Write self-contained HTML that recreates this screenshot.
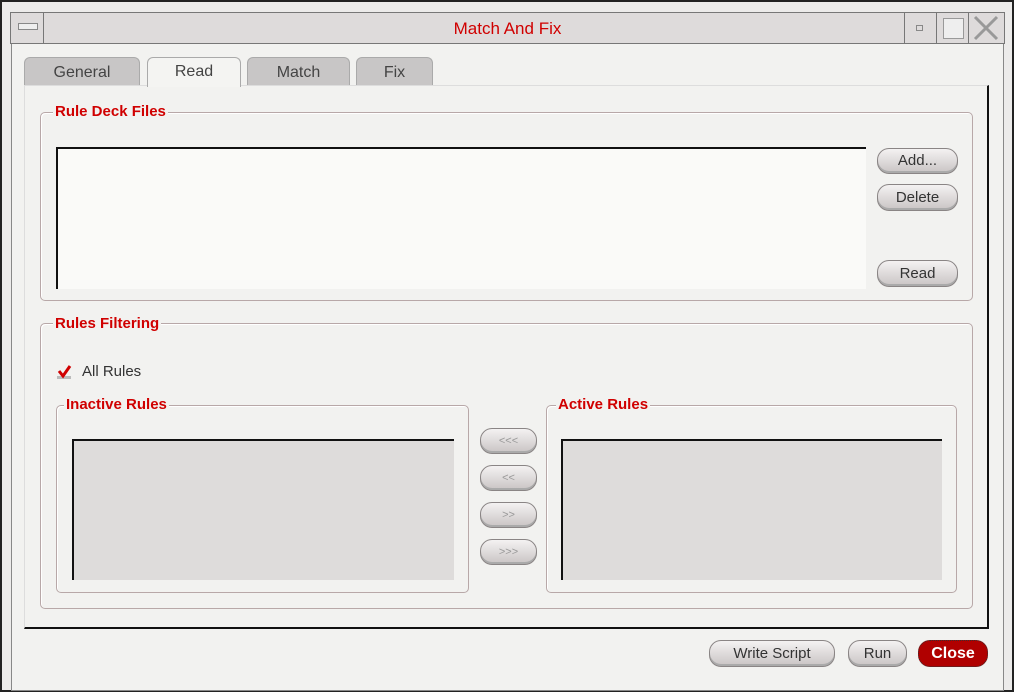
<!DOCTYPE html><html><head><style>
body{margin:0;width:1015px;height:694px;background:#fff;position:relative;overflow:hidden;font-family:"Liberation Sans",sans-serif}
.a{position:absolute;box-sizing:border-box}
.btn{position:absolute;box-sizing:border-box;border:1px solid #8a8585;border-radius:12px;background:linear-gradient(#f4f2f2,#dad6d6 60%,#c9c4c4);color:#333;font-size:15px;text-align:center;box-shadow:inset 0 -2px 0 #aaa}
.grp{position:absolute;box-sizing:border-box;border:1px solid #b8a8a8;border-radius:5px;box-shadow:1px 1px 0 #fff inset}
.lbl{position:absolute;color:#d00000;font-weight:bold;font-size:15px;background:#f2f2f0;padding:0 2px;line-height:16px}
.tab{position:absolute;box-sizing:border-box;border:1px solid #aaa;border-bottom:none;border-radius:6px 6px 0 0;background:#c8c6c6;color:#444;font-size:16px;text-align:center;line-height:30px}
</style></head><body>
<div class="a" style="left:0;top:0;width:1014px;height:692px;border:2px solid #222;background:#ecebea"></div>
<div class="a" style="left:10px;top:12px;width:995px;height:32px;border:1px solid #777;background:#dedbdb"></div>
<div class="a" style="left:43px;top:12px;width:1px;height:32px;background:#777"></div>
<div class="a" style="left:18px;top:23px;width:20px;height:7px;border:1px solid #888;background:#eee"></div>
<div class="a" style="left:0;top:19px;width:1015px;text-align:center;color:#d00000;font-size:17px">Match And Fix</div>
<div class="a" style="left:904px;top:12px;width:1px;height:32px;background:#777"></div>
<div class="a" style="left:936px;top:12px;width:1px;height:32px;background:#777"></div>
<div class="a" style="left:968px;top:12px;width:1px;height:32px;background:#777"></div>
<div class="a" style="left:916px;top:25px;width:7px;height:6px;border:1px solid #888"></div>
<div class="a" style="left:943px;top:18px;width:21px;height:21px;border:1px solid #999;background:#eee"></div>
<svg class="a" style="left:972px;top:15px" width="28" height="26"><path d="M3 2L25 24M25 2L3 24" stroke="#999" stroke-width="3"/></svg>
<div class="a" style="left:11px;top:44px;width:993px;height:647px;border:1px solid #888;border-top:none;background:#f2f2f0"></div>
<div class="tab" style="left:24px;top:57px;width:116px">General</div>
<div class="tab" style="left:147px;top:57px;width:94px;background:#f4f4f2;height:30px;line-height:28px;z-index:2">Read</div>
<div class="tab" style="left:247px;top:57px;width:103px">Match</div>
<div class="tab" style="left:356px;top:57px;width:77px">Fix</div>
<div class="a" style="left:24px;top:85px;width:965px;height:544px;border:1px solid #ddd;border-right:2px solid #111;border-bottom:2px solid #111;background:#f2f2f0"></div>
<div class="grp" style="left:40px;top:112px;width:933px;height:189px"></div>
<div class="lbl" style="left:53px;top:104px">Rule Deck Files</div>
<div class="a" style="left:56px;top:147px;width:810px;height:142px;background:#fafaf8;border-top:2px solid #111;border-left:2px solid #111"></div>
<div class="btn" style="left:877px;top:148px;width:81px;height:26px;line-height:24px">Add...</div>
<div class="btn" style="left:877px;top:184px;width:81px;height:27px;line-height:25px">Delete</div>
<div class="btn" style="left:877px;top:260px;width:81px;height:27px;line-height:25px">Read</div>
<div class="grp" style="left:40px;top:323px;width:933px;height:286px"></div>
<div class="lbl" style="left:53px;top:316px">Rules Filtering</div>
<svg class="a" style="left:56px;top:364px" width="18" height="16"><rect x="1" y="12" width="14" height="3" fill="#bbb"/><path d="M3 7L7 12L14 2" stroke="#d00000" stroke-width="3" fill="none"/></svg>
<div class="a" style="left:82px;top:363px;font-size:15px;color:#333">All Rules</div>
<div class="grp" style="left:56px;top:405px;width:413px;height:188px"></div>
<div class="lbl" style="left:64px;top:397px">Inactive Rules</div>
<div class="a" style="left:72px;top:439px;width:382px;height:141px;background:#dedcdb;border-top:2px solid #111;border-left:2px solid #111"></div>
<div class="grp" style="left:546px;top:405px;width:411px;height:188px"></div>
<div class="lbl" style="left:556px;top:397px">Active Rules</div>
<div class="a" style="left:561px;top:439px;width:381px;height:141px;background:#dedcdb;border-top:2px solid #111;border-left:2px solid #111"></div>
<div class="btn" style="left:480px;top:428px;width:57px;height:26px;line-height:24px;font-size:11px;color:#999">&lt;&lt;&lt;</div>
<div class="btn" style="left:480px;top:465px;width:57px;height:26px;line-height:24px;font-size:11px;color:#999">&lt;&lt;</div>
<div class="btn" style="left:480px;top:502px;width:57px;height:26px;line-height:24px;font-size:11px;color:#999">&gt;&gt;</div>
<div class="btn" style="left:480px;top:539px;width:57px;height:26px;line-height:24px;font-size:11px;color:#999">&gt;&gt;&gt;</div>
<div class="btn" style="left:709px;top:640px;width:126px;height:27px;line-height:25px">Write Script</div>
<div class="btn" style="left:848px;top:640px;width:59px;height:27px;line-height:25px">Run</div>
<div class="btn" style="left:918px;top:640px;width:70px;height:27px;line-height:25px;background:#b00000;border:1px dotted #333;color:#fff;font-weight:bold;box-shadow:none;font-size:16px">Close</div>
</body></html>
